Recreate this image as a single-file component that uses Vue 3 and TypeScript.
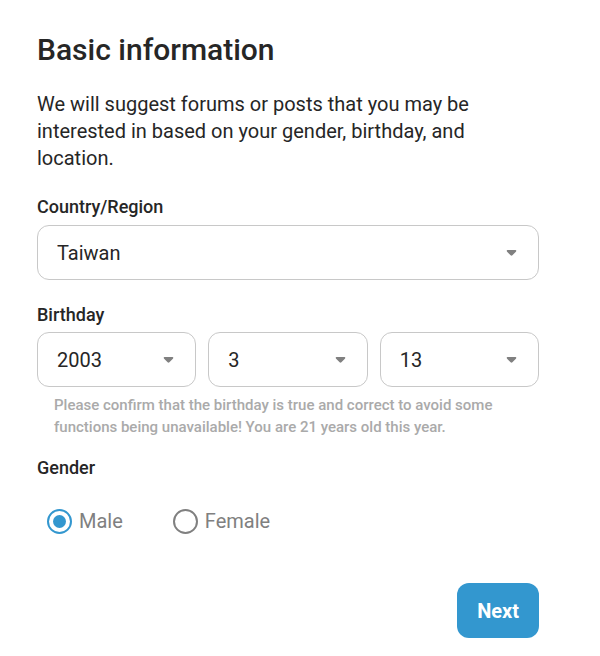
<script setup lang="ts">
import { ref, computed } from 'vue'

const country = ref('Taiwan')
const year = ref(2003)
const month = ref(3)
const day = ref(13)
const gender = ref('Male')
const referenceYear = 2024
const age = computed(() => referenceYear - year.value)
const countries = ['Taiwan', 'Hong Kong', 'Japan', 'Malaysia']
const years = Array.from({ length: 80 }, (_, i) => 2012 - i)
const days = computed(() => new Date(year.value, month.value, 0).getDate())
</script>

<template>
  <main class="page">
    <form @submit.prevent>
      <h1>Basic information</h1>
      <p class="intro">We will suggest forums or posts that you may be interested in based on your gender, birthday, and location.</p>

      <label class="label" for="country">Country/Region</label>
      <div class="select-box">
        <select id="country" v-model="country">
          <option v-for="c in countries" :key="c">{{ c }}</option>
        </select>
        <svg class="caret" viewBox="0 0 11 8"><path d="M1.500 1h8q.8 0 .8.8 0 .5-.4.9L6.400 6.300q-.9.9-1.800 0L1.100 2.700Q.7 2.300.7 1.800.7 1 1.500 1z" /></svg>
      </div>

      <fieldset class="birthday" aria-describedby="birthday-note">
        <legend class="label">Birthday</legend>
        <div class="dates">
          <div class="select-box">
            <select v-model="year" aria-label="Year">
              <option v-for="y in years" :key="y" :value="y">{{ y }}</option>
            </select>
            <svg class="caret" viewBox="0 0 11 8"><path d="M1.500 1h8q.8 0 .8.8 0 .5-.4.9L6.400 6.300q-.9.9-1.800 0L1.100 2.700Q.7 2.300.7 1.800.7 1 1.500 1z" /></svg>
          </div>
          <div class="select-box">
            <select v-model="month" aria-label="Month">
              <option v-for="m in 12" :key="m" :value="m">{{ m }}</option>
            </select>
            <svg class="caret" viewBox="0 0 11 8"><path d="M1.500 1h8q.8 0 .8.8 0 .5-.4.9L6.400 6.300q-.9.9-1.800 0L1.100 2.700Q.7 2.300.7 1.800.7 1 1.500 1z" /></svg>
          </div>
          <div class="select-box">
            <select v-model="day" aria-label="Day">
              <option v-for="d in days" :key="d" :value="d">{{ d }}</option>
            </select>
            <svg class="caret" viewBox="0 0 11 8"><path d="M1.500 1h8q.8 0 .8.8 0 .5-.4.9L6.400 6.300q-.9.9-1.800 0L1.100 2.700Q.7 2.300.7 1.800.7 1 1.500 1z" /></svg>
          </div>
        </div>
        <p id="birthday-note" class="note">Please confirm that the birthday is true and correct to avoid some functions being unavailable! You are {{ age }} years old this year.</p>
      </fieldset>

      <fieldset class="gender">
        <legend class="label">Gender</legend>
        <div class="radios">
          <label v-for="g in ['Male', 'Female']" :key="g" class="radio">
            <input v-model="gender" type="radio" name="gender" :value="g" />
            <span>{{ g }}</span>
          </label>
        </div>
      </fieldset>

      <div class="actions"><button type="submit">Next</button></div>
    </form>
  </main>
</template>

<style>
body {
  background: #fff;
}
</style>

<style scoped>
.page {
  padding: 32px 61px 18px 37px;
  color: #262626;
  font-family: Roboto, "Liberation Sans", sans-serif;
  font-size: 20px;
}
h1 {
  margin: 0;
  font-size: 30px;
  line-height: 36px;
  font-weight: 500;
}
.intro {
  margin: 23px 0 25px;
  line-height: 27px;
}
.label {
  display: block;
  padding: 0;
  margin-bottom: 8px;
  font-size: 18px;
  line-height: 20px;
  font-weight: 500;
}
fieldset {
  min-width: 0;
  margin: 0;
  padding: 0;
  border: 0;
}
.select-box {
  display: grid;
  align-items: center;
}
.select-box > * {
  grid-area: 1 / 1;
}
select {
  appearance: none;
  width: 100%;
  height: 55px;
  padding: 0 40px 0 19px;
  border: 1px solid #c8c8c8;
  border-radius: 12px;
  background: #fff;
  color: #262626;
  font: inherit;
}
.caret {
  justify-self: end;
  width: 11px;
  height: 8px;
  margin-right: 22px;
  fill: #808080;
  pointer-events: none;
}
.birthday {
  margin-top: 25px;
}
.birthday .label {
  margin-bottom: 7px;
}
.dates {
  display: grid;
  grid-template-columns: repeat(3, 1fr);
  gap: 12px;
}
.note {
  margin: 7px 17px 0;
  color: #aaa;
  font-size: 15px;
  line-height: 22px;
  font-weight: 500;
}
.gender {
  margin-top: 20px;
}
.radios {
  display: flex;
  gap: 50px;
  padding: 23px 10px 0;
}
.radio {
  display: flex;
  align-items: center;
  gap: 7px;
  color: #808080;
  line-height: 25px;
}
input {
  appearance: none;
  display: grid;
  place-items: center;
  width: 25px;
  height: 25px;
  margin: 0;
  border: 2px solid #808080;
  border-radius: 50%;
}
input:checked {
  border-color: #3397cf;
}
input:checked::before {
  content: "";
  width: 13px;
  height: 13px;
  border-radius: 50%;
  background: #3397cf;
}
.actions {
  display: flex;
  justify-content: flex-end;
  margin-top: 49px;
}
button {
  height: 55px;
  padding: 0 20px;
  border: 0;
  border-radius: 12px;
  background: #3397cf;
  color: #fff;
  font: inherit;
  font-weight: 700;
}
</style>
